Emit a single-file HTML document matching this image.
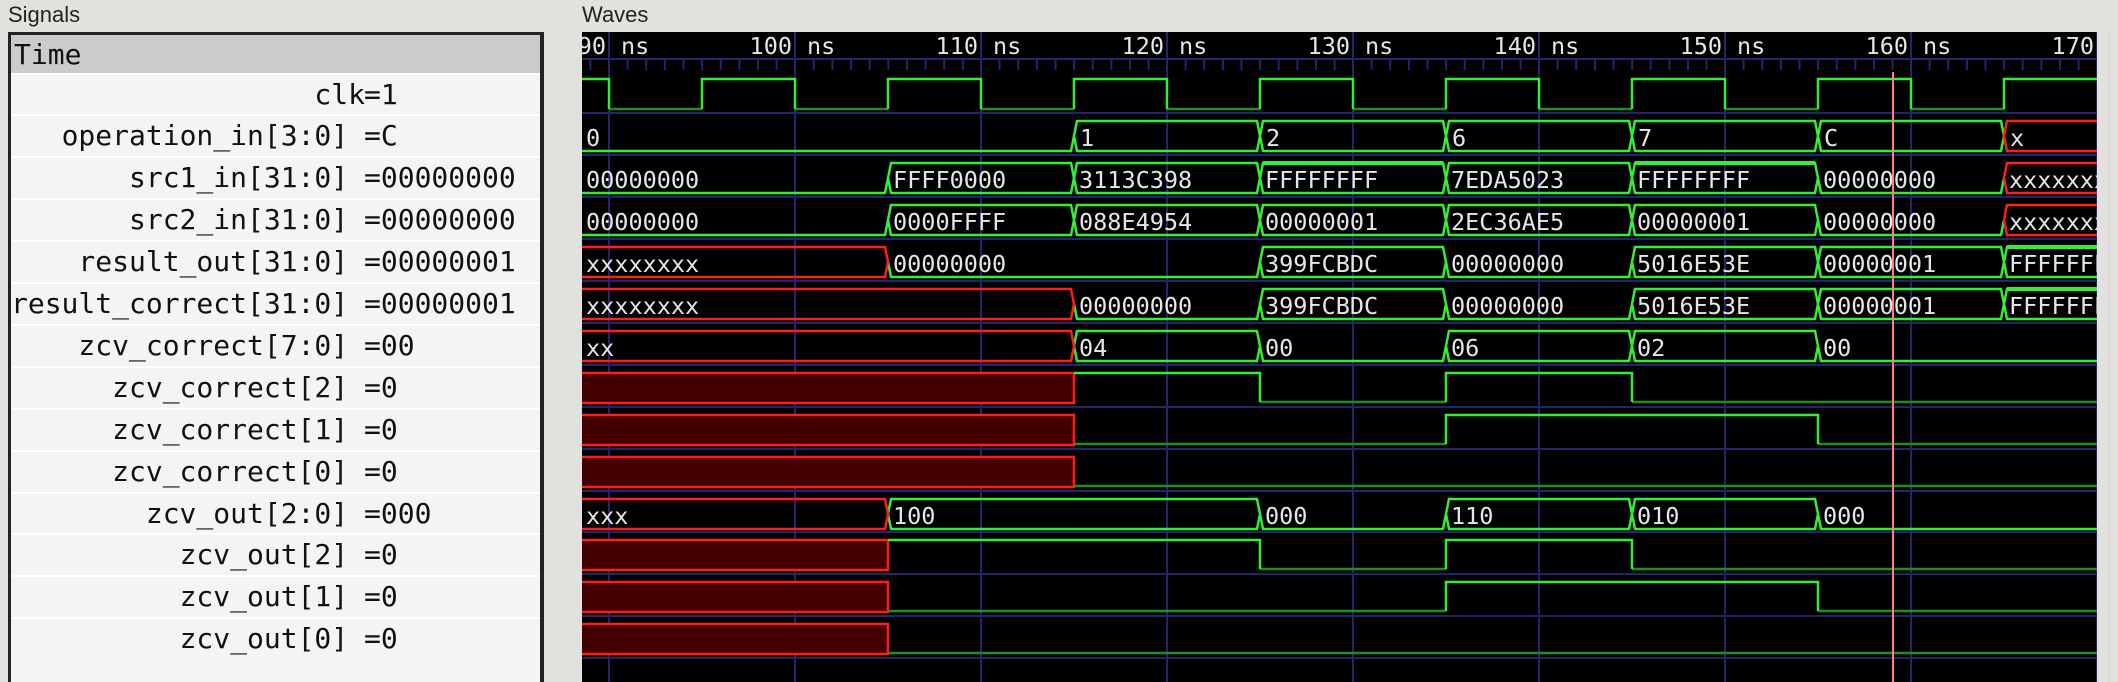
<!DOCTYPE html>
<html><head><meta charset="utf-8"><style>
html,body{margin:0;padding:0;width:2118px;height:682px;overflow:hidden;background:#e2e1dd;font-family:"Liberation Sans",sans-serif;}
.lbl{position:absolute;font-size:22px;color:#222;}
#sig{position:absolute;left:8px;top:32px;width:536px;height:650px;border:3px solid #222;border-right-width:4px;border-bottom:none;background:#f4f4f4;box-sizing:border-box;overflow:hidden;}
#hdr{position:absolute;left:0;top:0;width:100%;height:38px;background:#cbcbcb;font-family:"DejaVu Sans Mono",monospace;font-size:28px;line-height:40px;padding-left:3px;box-sizing:border-box;color:#111;}
.row{position:absolute;left:0;width:100%;height:40px;border-top:2px solid #fff;font-family:"DejaVu Sans Mono",monospace;font-size:28px;color:#111;}
.row .n{position:absolute;right:175px;top:3px;white-space:pre;}
.row .v{position:absolute;left:353px;top:3px;white-space:pre;}
svg{position:absolute;left:0;top:0;}
.t{font-family:"DejaVu Sans Mono",monospace;font-size:23.5px;fill:#e6e6e6;}
</style></head><body>
<div class="lbl" style="left:8px;top:2px;">Signals</div>
<div class="lbl" style="left:582px;top:2px;">Waves</div>
<div id="sig">
<div id="hdr">Time</div>
<div class="row" style="top:38px"><span class="n">clk</span><span class="v">=1</span></div>
<div class="row" style="top:79px"><span class="n">operation_in[3:0] </span><span class="v">=C</span></div>
<div class="row" style="top:121px"><span class="n">src1_in[31:0] </span><span class="v">=00000000</span></div>
<div class="row" style="top:163px"><span class="n">src2_in[31:0] </span><span class="v">=00000000</span></div>
<div class="row" style="top:205px"><span class="n">result_out[31:0] </span><span class="v">=00000001</span></div>
<div class="row" style="top:247px"><span class="n">result_correct[31:0] </span><span class="v">=00000001</span></div>
<div class="row" style="top:289px"><span class="n">zcv_correct[7:0] </span><span class="v">=00</span></div>
<div class="row" style="top:331px"><span class="n">zcv_correct[2] </span><span class="v">=0</span></div>
<div class="row" style="top:373px"><span class="n">zcv_correct[1] </span><span class="v">=0</span></div>
<div class="row" style="top:415px"><span class="n">zcv_correct[0] </span><span class="v">=0</span></div>
<div class="row" style="top:457px"><span class="n">zcv_out[2:0] </span><span class="v">=000</span></div>
<div class="row" style="top:498px"><span class="n">zcv_out[2] </span><span class="v">=0</span></div>
<div class="row" style="top:540px"><span class="n">zcv_out[1] </span><span class="v">=0</span></div>
<div class="row" style="top:582px"><span class="n">zcv_out[0] </span><span class="v">=0</span></div>
</div>
<svg width="2118" height="682" viewBox="0 0 2118 682">
<defs><clipPath id="c"><rect x="582" y="32" width="1515" height="650"/></clipPath></defs>
<line x1="2109" y1="34" x2="2109" y2="682" stroke="#cfcfcc" stroke-width="1"/>
<g clip-path="url(#c)">
<rect x="582" y="32" width="1515" height="650" fill="#000"/>
<g stroke="#23236e" stroke-width="2">
<line x1="609" y1="32" x2="609" y2="682"/><line x1="795" y1="32" x2="795" y2="682"/><line x1="981" y1="32" x2="981" y2="682"/><line x1="1167" y1="32" x2="1167" y2="682"/><line x1="1353" y1="32" x2="1353" y2="682"/><line x1="1539" y1="32" x2="1539" y2="682"/><line x1="1725" y1="32" x2="1725" y2="682"/><line x1="1911" y1="32" x2="1911" y2="682"/><line x1="2097" y1="32" x2="2097" y2="682"/>
<line x1="582" y1="59" x2="2097" y2="59"/>
<line x1="582" y1="113" x2="2097" y2="113"/><line x1="582" y1="155" x2="2097" y2="155"/><line x1="582" y1="197" x2="2097" y2="197"/><line x1="582" y1="239" x2="2097" y2="239"/><line x1="582" y1="281" x2="2097" y2="281"/><line x1="582" y1="323" x2="2097" y2="323"/><line x1="582" y1="365" x2="2097" y2="365"/><line x1="582" y1="407" x2="2097" y2="407"/><line x1="582" y1="449" x2="2097" y2="449"/><line x1="582" y1="491" x2="2097" y2="491"/><line x1="582" y1="532" x2="2097" y2="532"/><line x1="582" y1="574" x2="2097" y2="574"/><line x1="582" y1="616" x2="2097" y2="616"/><line x1="582" y1="658" x2="2097" y2="658"/>
</g>
<path stroke="#23236e" stroke-width="2" d="M590.4 60v10M627.6 60v10M646.2 60v10M664.9 60v10M683.5 60v10M702.1 60v10M720.7 60v10M739.4 60v10M758 60v10M776.6 60v10M813.8 60v10M832.4 60v10M851.1 60v10M869.7 60v10M888.3 60v10M906.9 60v10M925.6 60v10M944.2 60v10M962.8 60v10M999.6 60v10M1018.2 60v10M1036.9 60v10M1055.5 60v10M1074.1 60v10M1092.7 60v10M1111.4 60v10M1130 60v10M1148.6 60v10M1185.6 60v10M1204.2 60v10M1222.9 60v10M1241.5 60v10M1260.1 60v10M1278.7 60v10M1297.4 60v10M1316 60v10M1334.6 60v10M1371.6 60v10M1390.2 60v10M1408.9 60v10M1427.5 60v10M1446.1 60v10M1464.7 60v10M1483.4 60v10M1502 60v10M1520.6 60v10M1557.6 60v10M1576.2 60v10M1594.9 60v10M1613.5 60v10M1632.1 60v10M1650.7 60v10M1669.4 60v10M1688 60v10M1706.6 60v10M1743.6 60v10M1762.2 60v10M1780.9 60v10M1799.5 60v10M1818.1 60v10M1836.7 60v10M1855.4 60v10M1874 60v10M1892.6 60v10M1929.6 60v10M1948.2 60v10M1966.9 60v10M1985.5 60v10M2004.1 60v10M2022.7 60v10M2041.4 60v10M2060 60v10M2078.6 60v10"/>
<g class="t">
<text x="606" y="54" text-anchor="end">90</text><text x="621" y="54">ns</text>
<text x="792" y="54" text-anchor="end">100</text><text x="807" y="54">ns</text>
<text x="978" y="54" text-anchor="end">110</text><text x="993" y="54">ns</text>
<text x="1164" y="54" text-anchor="end">120</text><text x="1179" y="54">ns</text>
<text x="1350" y="54" text-anchor="end">130</text><text x="1365" y="54">ns</text>
<text x="1536" y="54" text-anchor="end">140</text><text x="1551" y="54">ns</text>
<text x="1722" y="54" text-anchor="end">150</text><text x="1737" y="54">ns</text>
<text x="1908" y="54" text-anchor="end">160</text><text x="1923" y="54">ns</text>
<text x="2094" y="54" text-anchor="end">170</text>
</g>
<g fill="none" stroke-width="2.5">
<path stroke="#1d8f1d" d="M609 109H702M795 109H888M981 109H1074M1167 109H1260M1353 109H1446M1539 109H1632M1725 109H1818M1911 109H2004"/>
<path stroke="#33ee33" d="M582 79H609V109M702 109V79H795V109M888 109V79H981V109M1074 109V79H1167V109M1260 109V79H1353V109M1446 109V79H1539V109M1632 109V79H1725V109M1818 109V79H1911V109M2004 109V79H2110"/>
</g>
<g fill="none" stroke="#33ee33" stroke-width="2.5">
<path d="M582 151H1071L1074 136"/>
<path d="M1074 136L1077 121H1257L1260 136L1257 151H1077Z"/>
<path d="M1260 136L1263 121H1443L1446 136L1443 151H1263Z"/>
<path d="M1446 136L1449 121H1629L1632 136L1629 151H1449Z"/>
<path d="M1632 136L1635 121H1815L1818 136L1815 151H1635Z"/>
<path d="M1818 136L1821 121H2001L2004 136L2001 151H1821Z"/>
<path d="M582 193H885L888 178"/>
<path d="M888 178L891 163H1071L1074 178L1071 193H891Z"/>
<path d="M1074 178L1077 163H1257L1260 178L1257 193H1077Z"/>
<path d="M1260 178L1263 163H1443L1446 178L1443 193H1263Z"/>
<path d="M1446 178L1449 163H1629L1632 178L1629 193H1449Z"/>
<path d="M1632 178L1635 163H1815L1818 178L1815 193H1635Z"/>
<path d="M1818 178L1821 193H2001L2004 178"/>
<path stroke-width="4" d="M1263 163H1443M1635 163H1815"/>
<path d="M582 235H885L888 220"/>
<path d="M888 220L891 205H1071L1074 220L1071 235H891Z"/>
<path d="M1074 220L1077 205H1257L1260 220L1257 235H1077Z"/>
<path d="M1260 220L1263 205H1443L1446 220L1443 235H1263Z"/>
<path d="M1446 220L1449 205H1629L1632 220L1629 235H1449Z"/>
<path d="M1632 220L1635 205H1815L1818 220L1815 235H1635Z"/>
<path d="M1818 220L1821 235H2001L2004 220"/>
<path d="M888 262L891 277H1257L1260 262"/>
<path d="M1260 262L1263 247H1443L1446 262L1443 277H1263Z"/>
<path d="M1446 262L1449 277H1629L1632 262"/>
<path d="M1632 262L1635 247H1815L1818 262L1815 277H1635Z"/>
<path d="M1818 262L1821 247H2001L2004 262L2001 277H1821Z"/>
<path d="M2004 262L2007 247H2110M2004 262L2007 277H2110"/>
<path stroke-width="4" d="M2007 247H2110"/>
<path d="M1074 304L1077 319H1257L1260 304"/>
<path d="M1260 304L1263 289H1443L1446 304L1443 319H1263Z"/>
<path d="M1446 304L1449 319H1629L1632 304"/>
<path d="M1632 304L1635 289H1815L1818 304L1815 319H1635Z"/>
<path d="M1818 304L1821 289H2001L2004 304L2001 319H1821Z"/>
<path d="M2004 304L2007 289H2110M2004 304L2007 319H2110"/>
<path stroke-width="4" d="M2007 289H2110"/>
<path d="M1074 346L1077 331H1257L1260 346L1257 361H1077Z"/>
<path d="M1260 346L1263 361H1443L1446 346"/>
<path d="M1446 346L1449 331H1629L1632 346L1629 361H1449Z"/>
<path d="M1632 346L1635 331H1815L1818 346L1815 361H1635Z"/>
<path d="M1818 346L1821 361H2110"/>
<path d="M888 514L891 499H1257L1260 514L1257 529H891Z"/>
<path d="M1260 514L1263 529H1443L1446 514"/>
<path d="M1446 514L1449 499H1629L1632 514L1629 529H1449Z"/>
<path d="M1632 514L1635 499H1815L1818 514L1815 529H1635Z"/>
<path d="M1818 514L1821 529H2110"/>
</g>
<g fill="none" stroke="#ff1c1c" stroke-width="2.5">
<path d="M2004 136L2007 121H2110M2004 136L2007 151H2110"/>
<path d="M2004 178L2007 163H2110M2004 178L2007 193H2110"/>
<path d="M2004 220L2007 205H2110M2004 220L2007 235H2110"/>
<path d="M582 247H885L888 262L885 277H582"/>
<path d="M582 289H1071L1074 304L1071 319H582"/>
<path d="M582 331H1071L1074 346L1071 361H582"/>
<path d="M582 499H885L888 514L885 529H582"/>
</g>
<g stroke-width="2.5" fill="none">
<rect x="580" y="373" width="494" height="30" fill="#440000" stroke="#ff1c1c"/>
<rect x="580" y="415" width="494" height="30" fill="#440000" stroke="#ff1c1c"/>
<rect x="580" y="457" width="494" height="30" fill="#440000" stroke="#ff1c1c"/>
<rect x="580" y="540" width="308" height="30" fill="#440000" stroke="#ff1c1c"/>
<rect x="580" y="582" width="308" height="30" fill="#440000" stroke="#ff1c1c"/>
<rect x="580" y="624" width="308" height="30" fill="#440000" stroke="#ff1c1c"/>
<path stroke="#1d8f1d" d="M1260 402H1446M1632 402H2110M1074 444H1446M1818 444H2110M1074 486H2110M1260 569H1446M1632 569H2110M888 611H1446M1818 611H2110M888 653H2110"/>
<path stroke="#33ee33" d="M1074 373H1260V402M1446 402V373H1632V402M1446 444V415H1818V444M888 540H1260V569M1446 569V540H1632V569M1446 611V582H1818V611"/>
</g>
<g class="t">
<text x="586" y="146">0</text><text x="1080" y="146">1</text><text x="1266" y="146">2</text><text x="1452" y="146">6</text><text x="1638" y="146">7</text><text x="1824" y="146">C</text><text x="2010" y="146">x</text>
<text x="586" y="188">00000000</text><text x="893" y="188">FFFF0000</text><text x="1079" y="188">3113C398</text><text x="1265" y="188">FFFFFFFF</text><text x="1451" y="188">7EDA5023</text><text x="1637" y="188">FFFFFFFF</text><text x="1823" y="188">00000000</text><text x="2009" y="188">xxxxxxxx</text>
<text x="586" y="230">00000000</text><text x="893" y="230">0000FFFF</text><text x="1079" y="230">088E4954</text><text x="1265" y="230">00000001</text><text x="1451" y="230">2EC36AE5</text><text x="1637" y="230">00000001</text><text x="1823" y="230">00000000</text><text x="2009" y="230">xxxxxxxx</text>
<text x="586" y="272">xxxxxxxx</text><text x="893" y="272">00000000</text><text x="1265" y="272">399FCBDC</text><text x="1451" y="272">00000000</text><text x="1637" y="272">5016E53E</text><text x="1823" y="272">00000001</text><text x="2009" y="272">FFFFFFFF</text>
<text x="586" y="314">xxxxxxxx</text><text x="1079" y="314">00000000</text><text x="1265" y="314">399FCBDC</text><text x="1451" y="314">00000000</text><text x="1637" y="314">5016E53E</text><text x="1823" y="314">00000001</text><text x="2009" y="314">FFFFFFFF</text>
<text x="586" y="356">xx</text><text x="1079" y="356">04</text><text x="1265" y="356">00</text><text x="1451" y="356">06</text><text x="1637" y="356">02</text><text x="1823" y="356">00</text>
<text x="586" y="524">xxx</text><text x="893" y="524">100</text><text x="1265" y="524">000</text><text x="1451" y="524">110</text><text x="1637" y="524">010</text><text x="1823" y="524">000</text>
</g>
<line x1="1893" y1="72" x2="1893" y2="682" stroke="#ff8080" stroke-width="2"/>
</g>
</svg>
</body></html>
